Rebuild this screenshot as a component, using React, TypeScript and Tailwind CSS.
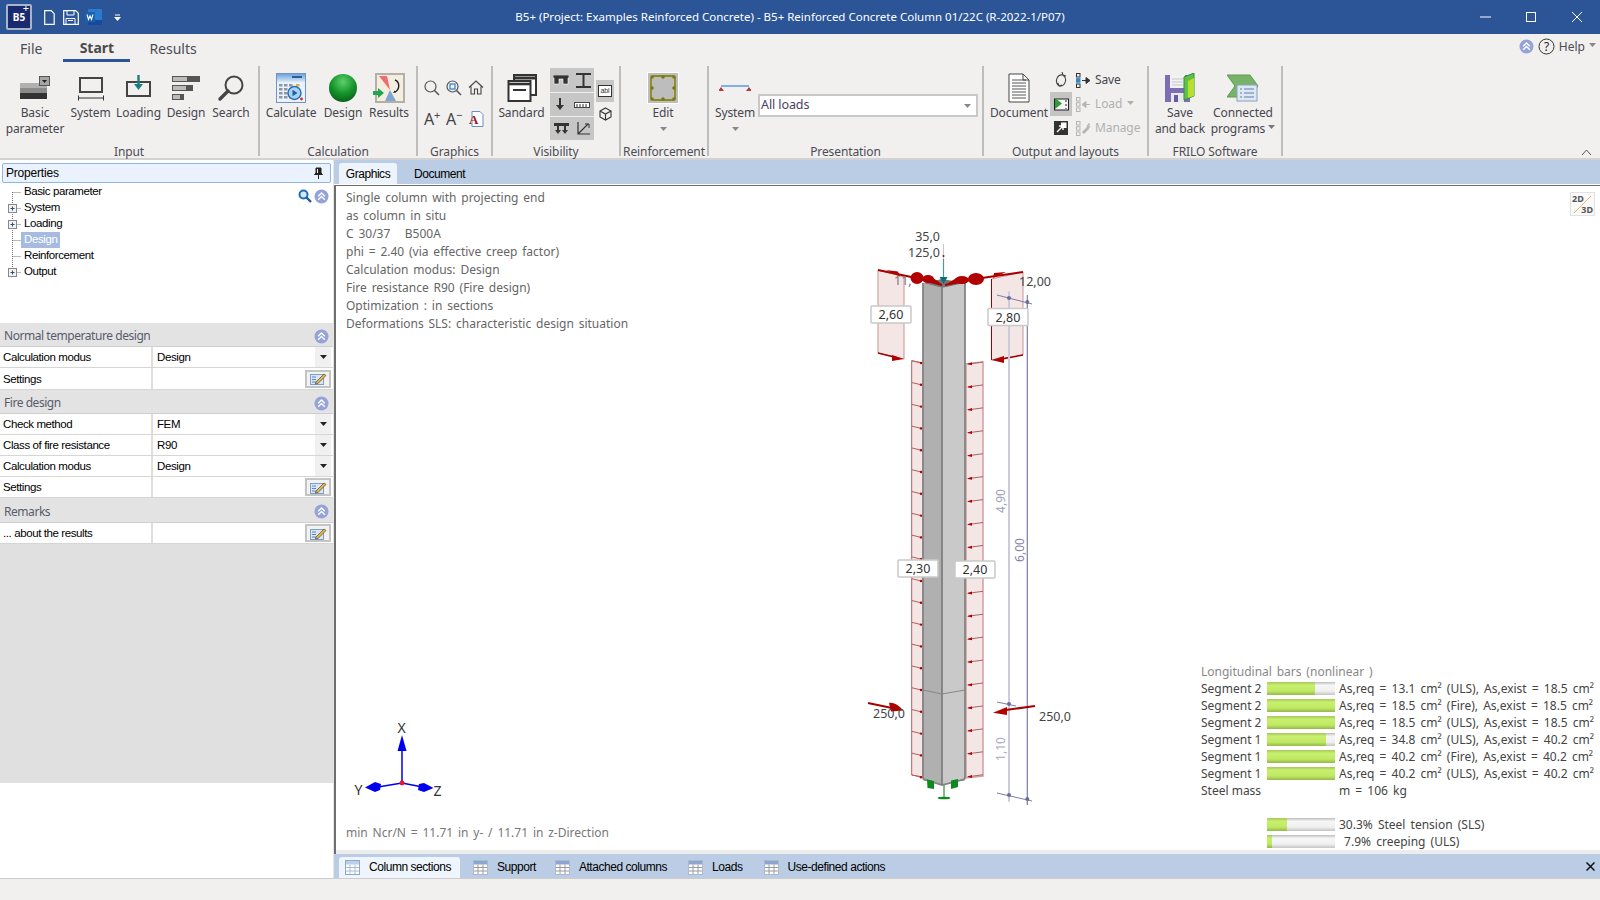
import type { ReactNode } from "react";

const UI = "font-['Noto_Sans',sans-serif]";
const CLASSIC = "font-['Liberation_Sans',sans-serif]";

/* small shared glyphs */
const Caret = ({ color = "#777" }: { color?: string }) => (
  <svg width="7" height="4" viewBox="0 0 7 4"><path d="M0 0h7L3.5 4z" fill={color} /></svg>
);

const CollapseDot = () => (
  <svg width="15" height="15" viewBox="0 0 15 15">
    <circle cx="7.5" cy="7.5" r="7" fill="#95a3d8" />
    <path d="M4.2 7.2 7.5 4l3.3 3.2M4.2 10.8 7.5 7.6l3.3 3.2" fill="none" stroke="#fff" strokeWidth="1.4" />
  </svg>
);

const GridIcon = ({ active }: { active?: boolean }) => (
  <svg width="15" height="15" viewBox="0 0 15 15">
    <rect x="0.5" y="0.5" width="14" height="14" fill="#fff" stroke={active ? "#8fa9cc" : "#a9b9d2"} />
    <rect x="1" y="1" width="13" height="3.5" fill={active ? "#bcd0ea" : "#8ca6cf"} />
    <path d="M1 7.5h13M1 11h13M5 4.5V14M10 4.5V14" stroke={active ? "#a7bcd8" : "#9a9a9a"} />
  </svg>
);

const EditIcon = () => (
  <svg width="17" height="13" viewBox="0 0 17 13">
    <rect x="0.5" y="2.5" width="13" height="10" fill="#d8e6f6" stroke="#7f9fc8" />
    <path d="M2 5h4M2 7.5h4M2 10h4" stroke="#5f86bd" />
    <path d="M6 10 14 2l2 1.5L8 11.5 5.5 12z" fill="#e8b93c" stroke="#444" strokeWidth="0.7" />
  </svg>
);

/* ribbon icons */
const BasicIcon = () => (
  <svg width="32" height="26" viewBox="0 0 32 26">
    <rect x="1" y="8" width="27" height="5" fill="#b0b0b0" />
    <rect x="1" y="13" width="27" height="5" fill="#8a8a8a" />
    <rect x="1" y="18" width="27" height="6" fill="#333" />
    <rect x="20.5" y="1.5" width="10" height="9" fill="#a5a5a5" stroke="#555" />
    <path d="M23 5h5l-2.5 3z" fill="#222" />
  </svg>
);
const SystemIcon = () => (
  <svg width="28" height="26" viewBox="0 0 28 26">
    <rect x="3" y="3" width="22" height="14" fill="none" stroke="#444" strokeWidth="2" />
    <path d="M1 23h26M1.5 20.5v5M26.5 20.5v5" stroke="#333" />
  </svg>
);
const LoadingIcon = () => (
  <svg width="26" height="26" viewBox="0 0 26 26">
    <rect x="1" y="7" width="23" height="14" fill="none" stroke="#444" strokeWidth="2" />
    <path d="M12.5 0v10" stroke="#16807c" strokeWidth="2.4" />
    <path d="M8 9h9l-4.5 6z" fill="#16807c" />
  </svg>
);
const DesignBarsIcon = () => (
  <svg width="30" height="26" viewBox="0 0 30 26">
    <rect x="1" y="1" width="28" height="6" fill="#555" />
    <rect x="2" y="2" width="14" height="4" fill="#bbb" />
    <rect x="1" y="10" width="21" height="6" fill="#555" />
    <rect x="2" y="11" width="13" height="4" fill="#bbb" />
    <rect x="1" y="19" width="12" height="6" fill="#555" />
    <rect x="2" y="20" width="7" height="4" fill="#bbb" />
  </svg>
);
const SearchBigIcon = () => (
  <svg width="28" height="28" viewBox="0 0 28 28">
    <circle cx="17" cy="11" r="8.5" fill="none" stroke="#444" strokeWidth="2" />
    <path d="M11 17 3 25" stroke="#444" strokeWidth="3.4" strokeLinecap="round" />
  </svg>
);
const CalculateIcon = () => (
  <svg width="30" height="30" viewBox="0 0 30 30">
    <defs>
      <linearGradient id="calc" x1="0" y1="0" x2="0" y2="1">
        <stop offset="0" stopColor="#6ea3dc" />
        <stop offset="1" stopColor="#d9e8f7" />
      </linearGradient>
    </defs>
    <rect x="0.5" y="0.5" width="29" height="29" fill="#eaf2fb" stroke="#6f95c4" />
    <rect x="1" y="1" width="28" height="8" fill="url(#calc)" />
    <path d="M16 4h10" stroke="#2c5c9a" strokeWidth="2" />
    {[11, 15, 19, 23].map((y) =>
      [3, 8, 13].map((x) => <rect key={`${x}-${y}`} x={x} y={y} width="3.5" height="2.5" fill="#8d97a8" />)
    )}
    <rect x="20" y="11" width="3.5" height="2.5" fill="#e9a94a" />
    <circle cx="18.5" cy="20" r="6.5" fill="#a8d2f2" stroke="#2a6cb0" strokeWidth="1.4" />
    <path d="M16.5 16.8v6.4l5-3.2z" fill="#1f5fa8" />
    <circle cx="25.5" cy="26" r="1.4" fill="#c33" />
  </svg>
);
const SphereIcon = () => (
  <svg width="30" height="30" viewBox="0 0 30 30">
    <defs>
      <radialGradient id="sphere" cx="0.5" cy="0.28" r="0.75">
        <stop offset="0" stopColor="#5fd06a" />
        <stop offset="0.55" stopColor="#15962c" />
        <stop offset="1" stopColor="#0a5c1a" />
      </radialGradient>
    </defs>
    <circle cx="15" cy="15" r="14" fill="url(#sphere)" />
  </svg>
);
const ResultsIcon = () => (
  <svg width="32" height="30" viewBox="0 0 32 30">
    <rect x="3" y="1" width="28" height="28" fill="#f3eee0" stroke="#b5b0a5" strokeWidth="2" />
    <path d="M6 3h8l3 14z" fill="#ee6d6d" />
    <path d="M17 17l6 11H12z" fill="#7ea6d4" />
    <path d="M22 7c5 2 5 9 0 12" fill="none" stroke="#222" strokeWidth="1.4" />
    <path d="M23 19.5l-3 .5 1.5-2.5z" fill="#222" />
    <path d="M0 18h5v-3l6 5-6 5v-3H0z" fill="#22a550" />
  </svg>
);
const SmallMag = ({ frame }: { frame?: boolean }) => (
  <svg width="16" height="16" viewBox="0 0 16 16">
    <circle cx="6.5" cy="6.5" r="5.5" fill="none" stroke="#555" strokeWidth="1.2" />
    <path d="M10.5 10.5 15 15" stroke="#555" strokeWidth="1.6" />
    {frame && <rect x="4" y="4" width="5" height="5" fill="none" stroke="#2f80c8" strokeWidth="1.2" />}
  </svg>
);
const HomeIcon = () => (
  <svg width="16" height="15" viewBox="0 0 16 15">
    <path d="M1 7.5 8 1l7 6.5M3 6.5V14h3.5V9h3v5H13V6.5" fill="none" stroke="#444" strokeWidth="1.1" />
  </svg>
);
const SizeA = ({ sign }: { sign: string }) => (
  <span className="relative text-[16px] leading-none text-[#444]">
    A<span className="absolute -top-[2px] -right-[6px] text-[11px] leading-none">{sign}</span>
  </span>
);
const FontDocIcon = () => (
  <svg width="15" height="16" viewBox="0 0 15 16">
    <path d="M3 .5h8l3 3v12H3z" fill="#fff" stroke="#6d8fc0" />
    <text x="0" y="13" fontSize="13" fontWeight="700" fontFamily="Liberation Serif" fill="#a01818">A</text>
  </svg>
);
const StackedWindows = () => (
  <svg width="30" height="30" viewBox="0 0 30 30">
    <rect x="7" y="2" width="22" height="20" fill="#fff" stroke="#333" strokeWidth="2" />
    <path d="M7 5h22" stroke="#333" strokeWidth="3" />
    <rect x="1.5" y="8" width="22" height="20" fill="#fff" stroke="#333" strokeWidth="2" />
    <path d="M1.5 11h22" stroke="#333" strokeWidth="2.6" />
    <path d="M6 17h13" stroke="#333" strokeWidth="2" />
  </svg>
);
const ReinforceIcon = () => (
  <div className="flex h-[32px] w-[32px] items-center justify-center border border-white bg-[#bdbdbd]">
    <svg width="28" height="28" viewBox="0 0 28 28">
      <rect x="2" y="2" width="24" height="24" rx="3" fill="none" stroke="#8a8a1e" strokeWidth="1.8" />
      {[[3, 3], [14, 3], [25, 3], [3, 14], [25, 14], [3, 25], [14, 25], [25, 25]].map(([x, y]) => (
        <circle key={`${x}${y}`} cx={x} cy={y} r="1.8" fill="#7b7b12" />
      ))}
    </svg>
  </div>
);
const BeamIcon = () => (
  <svg width="32" height="8" viewBox="0 0 32 8">
    <path d="M2 2h28" stroke="#7fb0e4" strokeWidth="2" />
    <path d="M2 3 5 7H-1zM30 3l3 4h-6z" fill="#b23a3a" />
  </svg>
);
const DocumentIcon = () => (
  <svg width="22" height="30" viewBox="0 0 22 30">
    <path d="M1 1h14l6 6v22H1z" fill="#fff" stroke="#444" />
    <path d="M15 1v6h6" fill="none" stroke="#444" />
    {[6, 9, 12, 15, 18, 21, 24].map((y) => (
      <path key={y} d={`M4 ${y + 1}h14`} stroke="#555" />
    ))}
  </svg>
);
const ListArrow = ({ dim, kind }: { dim?: boolean; kind: "save" | "load" | "manage" }) => {
  const c = dim ? "#b5b5b5" : "#333";
  return (
    <svg width="15" height="15" viewBox="0 0 15 15">
      <rect x="0.5" y="0.5" width="3.5" height="3.5" fill="none" stroke={c} />
      <rect x="0.5" y="5.7" width="3.5" height="3.5" fill={dim ? "none" : "#2e8bc8"} stroke={dim ? c : "#2e8bc8"} />
      <rect x="0.5" y="11" width="3.5" height="3.5" fill="none" stroke={c} />
      {kind === "save" && <path d="M6 7.5h5M10 4.5l4 3-4 3z" stroke={c} fill={c} />}
      {kind === "load" && <path d="M14 7.5H9M10 4.5l-4 3 4 3z" stroke={c} fill={c} />}
      {kind === "manage" && <path d="M13.5 2.5 11.5 5l1 1.5L14 5M12 6l-5 5 1 1 5-5" stroke={c} fill="none" strokeWidth="1.5" />}
    </svg>
  );
};
const SaveBackIcon = () => (
  <svg width="30" height="30" viewBox="0 0 30 30">
    <rect x="0" y="2" width="25" height="27" fill="#7d6db5" />
    <rect x="5" y="2" width="15" height="13" fill="#f2f2f2" />
    <path d="M7 6h11M7 9h11M7 12h11" stroke="#c5c5c5" />
    <rect x="6" y="20" width="13" height="9" fill="#e8e8e8" />
    <rect x="9" y="22" width="4" height="7" fill="#6a5aa5" />
    <path d="M19 4 29 0v23l-10 4z" fill="#62c04a" stroke="#2e8f3a" />
    <path d="M23 8l6-3v18l-6 2z" fill="#b6e02e" />
  </svg>
);
const ConnectedIcon = () => (
  <svg width="32" height="28" viewBox="0 0 32 28">
    <path d="M0 1h23l8 11-8 11H0l8-11z" fill="#79b36a" stroke="#5e9a52" />
    <rect x="10" y="11" width="20" height="16" fill="#dee8f4" stroke="#8aa0bd" />
    <path d="M13 15h2M17 15h10M13 19h2M17 19h10M13 23h2M17 23h10" stroke="#5f7ea8" />
  </svg>
);
const SmallIconBase = ({ children, bg }: { children: ReactNode; bg?: boolean }) => (
  <div className={`flex h-[24px] w-[22px] items-center justify-center ${bg ? "bg-[#c4c4c4]" : ""}`}>{children}</div>
);

/* ribbon parts */
const RibbonButton = ({ icon, label, w, caret }: { icon: ReactNode; label: string[]; w: string; caret?: boolean }) => (
  <div className={`flex shrink-0 flex-col items-center ${w}`}>
    <div className="flex h-[43px] items-center justify-center pt-[8px]">{icon}</div>
    {label.map((l, i) => (
      <div key={l} className="flex h-[16px] items-center whitespace-nowrap leading-[16px]">
        {l}
        {caret && i === label.length - 1 && label.length > 1 && <span className="ml-[3px] mb-[4px] inline-flex"><Caret /></span>}
      </div>
    ))}
    {caret && label.length === 1 && <div className="mt-[6px] flex"><Caret color="#888" /></div>}
  </div>
);

const Group = ({ w, label, children }: { w: string; label: string; children: ReactNode }) => (
  <div className={`flex h-full shrink-0 flex-col ${w}`}>
    <div className="flex flex-1 items-start">{children}</div>
    <div className="flex h-[12px] items-center justify-center whitespace-nowrap text-[#4c4c55]">{label}</div>
  </div>
);
const GroupRule = () => <div className="mt-[4px] h-[90px] w-[2px] shrink-0 bg-[#bdbdbd]" />;

const Ribbon = () => (
  <div className={`flex h-[98px] shrink-0 items-start border-b-2 border-[#d2d2d2] bg-[#f1f0ef] text-[12px] tracking-[-0.1px] text-[#46464e] ${UI}`}>
    <Group w="w-[258px]" label="Input">
      <div className="flex pl-[2px]">
        <RibbonButton icon={<BasicIcon />} label={["Basic", "parameter"]} w="w-[66px]" />
        <RibbonButton icon={<SystemIcon />} label={["System"]} w="w-[45px]" />
        <RibbonButton icon={<LoadingIcon />} label={["Loading"]} w="w-[51px]" />
        <RibbonButton icon={<DesignBarsIcon />} label={["Design"]} w="w-[44px]" />
        <RibbonButton icon={<SearchBigIcon />} label={["Search"]} w="w-[46px]" />
      </div>
    </Group>
    <GroupRule />
    <Group w="w-[156px]" label="Calculation">
      <div className="flex pl-[3px]">
        <RibbonButton icon={<CalculateIcon />} label={["Calculate"]} w="w-[56px]" />
        <RibbonButton icon={<SphereIcon />} label={["Design"]} w="w-[48px]" />
        <RibbonButton icon={<ResultsIcon />} label={["Results"]} w="w-[44px]" />
      </div>
    </Group>
    <GroupRule />
    <Group w="w-[73px]" label="Graphics">
      <div className="grid grid-cols-3 grid-rows-2 pl-[3px] pt-[18px]">
        <div className="flex h-[29px] w-[22px] items-start justify-center"><SmallMag /></div>
        <div className="flex h-[29px] w-[22px] items-start justify-center"><SmallMag frame /></div>
        <div className="flex h-[29px] w-[22px] items-start justify-center"><HomeIcon /></div>
        <div className="flex h-[20px] w-[22px] items-center justify-start pl-[3px]"><SizeA sign="+" /></div>
        <div className="flex h-[20px] w-[22px] items-center justify-start pl-[3px]"><SizeA sign="−" /></div>
        <div className="flex h-[20px] w-[22px] items-center justify-center"><FontDocIcon /></div>
      </div>
    </Group>
    <GroupRule />
    <Group w="w-[126px]" label="Visibility">
      <div className="flex">
        <RibbonButton icon={<StackedWindows />} label={["Sandard"]} w="w-[57px]" />
        <div className="flex flex-col pt-[6px]">
          <div className="flex h-[24px] w-[44px] items-center justify-around bg-[#c6c6c6]">
            <svg width="16" height="10" viewBox="0 0 16 10"><path d="M0 0h16v3h-1v6h-5V4H6v5H1V3H0z" fill="#333" stroke="#fff" strokeWidth="0.6" /></svg>
            <svg width="15" height="15" viewBox="0 0 15 15"><path d="M0 1h15M0 14h15M7.5 1v13" stroke="#333" strokeWidth="2" /></svg>
          </div>
          <div className="mt-[1px] flex h-[23px] w-[44px] items-center justify-around bg-[#c6c6c6]">
            <svg width="10" height="13" viewBox="0 0 10 13"><path d="M5 0v8" stroke="#333" strokeWidth="2" /><path d="M1 7h8l-4 5z" fill="#333" /></svg>
            <svg width="16" height="6" viewBox="0 0 16 6"><rect x=".5" y=".5" width="15" height="5" fill="#fff" stroke="#444" /><path d="M3 2v3M6 2v3M9 2v3M12 2v3" stroke="#333" /></svg>
          </div>
          <div className="mt-[1px] flex h-[23px] w-[44px] items-center justify-around bg-[#c6c6c6]">
            <svg width="15" height="11" viewBox="0 0 15 11"><rect width="15" height="3" fill="#333" /><path d="M4 2v6M11 2v6" stroke="#333" strokeWidth="2" /><path d="M1 7h6l-3 4zM8 7h6l-3 4z" fill="#333" /></svg>
            <svg width="15" height="15" viewBox="0 0 15 15"><path d="M2 1v12h12M2 13 12 3" fill="none" stroke="#333" strokeWidth="1.2" /><path d="M9 3h4v4" fill="none" stroke="#333" /></svg>
          </div>
        </div>
        <div className="flex w-[22px] flex-col items-center pt-[18px]">
          <div className="flex h-[22px] w-[18px] items-center justify-center bg-[#c6c6c6]">
            <span className={`border border-[#333] bg-white px-[1px] text-[7px] leading-[10px] text-[#333] ${CLASSIC}`}>abl</span>
          </div>
          <svg className="mt-[5px]" width="13" height="14" viewBox="0 0 13 14"><path d="M6.5 1 12 4v6l-5.5 3L1 10V4zM1 4l5.5 3L12 4M6.5 7v6" fill="none" stroke="#333" strokeWidth="1.1" /></svg>
        </div>
      </div>
    </Group>
    <GroupRule />
    <Group w="w-[86px]" label="Reinforcement">
      <div className="flex w-full justify-center pr-[2px]">
        <RibbonButton icon={<ReinforceIcon />} label={["Edit"]} w="w-[40px]" caret />
      </div>
    </Group>
    <GroupRule />
    <Group w="w-[273px]" label="Presentation">
      <div className="flex items-start">
        <RibbonButton icon={<BeamIcon />} label={["System"]} w="w-[52px]" caret />
        <div className="-ml-[3px] mt-[32px] flex h-[23px] w-[220px] items-center justify-between border-2 border-[#c8c8c8] bg-white pl-[1px] pr-[5px] text-[12.5px] text-[#4a4060]">
          All loads
          <Caret color="#888" />
        </div>
      </div>
    </Group>
    <GroupRule />
    <Group w="w-[163px]" label="Output and layouts">
      <div className="flex items-start">
        <RibbonButton icon={<DocumentIcon />} label={["Document"]} w="w-[70px]" />
        <div className="-ml-[4px] flex flex-col pt-[6px]">
          <SmallIconBase>
            <svg width="14" height="17" viewBox="0 0 14 17"><path d="M9 3C3 2 0 10 5 14M5 14l-1-3M5 14l3-1M5 14c6 1 9-7 4-11M9 3 8 0M9 3l3 1" fill="none" stroke="#444" strokeWidth="1.1" /></svg>
          </SmallIconBase>
          <SmallIconBase bg>
            <svg width="15" height="14" viewBox="0 0 15 14"><rect x=".5" y="2" width="14" height="11" fill="#f4f4f4" stroke="#222" /><path d="M1 1v11l7-5.5z" fill="#2f9a3a" /><path d="M12 3v2M12 7v2M12 11v1" stroke="#222" /></svg>
          </SmallIconBase>
          <SmallIconBase>
            <svg width="14" height="14" viewBox="0 0 14 14"><rect width="14" height="14" fill="#333" /><rect x="7" y="1.5" width="5.5" height="5.5" fill="#fff" /><path d="M3 11 9 5M5 5h4v4" stroke="#fff" fill="none" strokeWidth="1.4" /></svg>
          </SmallIconBase>
        </div>
        <div className="ml-[4px] flex flex-col pt-[6px]">
          <div className="flex h-[24px] items-center gap-[4px]"><ListArrow kind="save" />Save</div>
          <div className="flex h-[24px] items-center gap-[4px] text-[#b0b0b0]"><ListArrow kind="load" dim />Load<span className="mb-[3px] ml-[1px] flex"><Caret color="#b0b0b0" /></span></div>
          <div className="flex h-[24px] items-center gap-[4px] text-[#b0b0b0]"><ListArrow kind="manage" dim />Manage</div>
        </div>
      </div>
    </Group>
    <GroupRule />
    <Group w="w-[132px]" label="FRILO Software">
      <div className="flex pl-[3px]">
        <RibbonButton icon={<SaveBackIcon />} label={["Save", "and back"]} w="w-[56px]" />
        <RibbonButton icon={<ConnectedIcon />} label={["Connected", "programs"]} w="w-[70px]" caret />
      </div>
    </Group>
    <GroupRule />
    <div className="ml-auto mr-[8px] mt-[87px] flex">
      <svg width="11" height="7" viewBox="0 0 11 7"><path d="M1 6 5.5 1 10 6" fill="none" stroke="#555" /></svg>
    </div>
  </div>
);

/* left side */
const TreeRow = ({ label, plus, first, last, selected }: { label: string; plus?: boolean; first?: boolean; last?: boolean; selected?: boolean }) => (
  <div className="flex h-[16px] items-center">
    <svg width="21" height="16" viewBox="0 0 21 16" className="shrink-0">
      <path d={`M12.5 ${first ? 8 : 0}V${last ? 8 : 16}`} stroke="#777" strokeDasharray="1 1" />
      <path d="M12.5 8.5H21" stroke="#777" strokeDasharray="1 1" />
      {plus && (
        <>
          <rect x="8.5" y="4.5" width="8" height="8" fill="#f2f2f2" stroke="#888" />
          <path d="M10.5 8.5h4M12.5 6.5v4" stroke="#2a4a8a" />
        </>
      )}
    </svg>
    <span className={`flex h-[16px] items-center px-[3px] ${selected ? "bg-[#a6bbdf] text-white" : "text-black"}`}>{label}</span>
  </div>
);

const SectionHead = ({ label, h }: { label: string; h: string }) => (
  <div className={`flex items-center justify-between border-b border-[#cfcfcf] bg-[#e3e3e3] pl-[4px] pr-[4px] pt-[3px] text-[12px] tracking-[-0.45px] text-[#565c6c] ${h} ${UI}`}>
    {label}
    <CollapseDot />
  </div>
);

const PropRow = ({ label, value, kind, h = "h-[21px]" }: { label: string; value?: string; kind: "select" | "edit"; h?: string }) => (
  <div className={`flex border-b border-[#d6d6d6] bg-white ${h}`}>
    <div className="flex w-[153px] shrink-0 items-center border-r-2 border-[#dedede] pl-[3px] pt-[2px]">{label}</div>
    <div className="flex flex-1 items-center justify-between pl-[4px]">
      <span className="pt-[2px]">{value}</span>
      {kind === "select" ? (
        <div className="mr-[2px] flex h-full w-[16px] items-center justify-center bg-[#f0f0f0]"><Caret color="#222" /></div>
      ) : (
        <div className="mr-[2px] flex h-[18px] w-[26px] items-center justify-center border-2 border-[#c4c4c4] bg-[#f2f2f2]"><EditIcon /></div>
      )}
    </div>
  </div>
);

const LeftPanel = () => (
  <div className={`flex w-[334px] shrink-0 flex-col border-r border-[#e4e4e4] bg-white text-[11.5px] tracking-[-0.4px] ${CLASSIC}`}>
    <div className="shrink-0 px-[2px] pt-[3px]">
      <div className="flex h-[20px] items-center justify-between rounded-[2px] border border-[#8fb6e6] bg-[#eaf3fd] pl-[3px] pr-[7px] text-[12px] tracking-[-0.2px] text-black">
        Properties
        <svg width="9" height="12" viewBox="0 0 9 12"><path d="M2 1h5v5l1.5 1.5h-8L2 6zM4.5 7.5V12" fill="#222" stroke="#222" /><path d="M3.5 2v4" stroke="#fff" /></svg>
      </div>
    </div>
    <div className="flex h-[140px] shrink-0 justify-between pr-[4px] pt-[1px]">
      <div className="flex flex-col">
        <TreeRow label="Basic parameter" first />
        <TreeRow label="System" plus />
        <TreeRow label="Loading" plus />
        <TreeRow label="Design" selected />
        <TreeRow label="Reinforcement" />
        <TreeRow label="Output" plus last />
      </div>
      <div className="flex items-start gap-[2px] pt-[5px]">
        <svg width="14" height="14" viewBox="0 0 14 14"><circle cx="5.5" cy="5.5" r="4" fill="#d5e8f8" stroke="#1f6fb0" strokeWidth="2" /><path d="M8.5 8.5 13 13" stroke="#1f5a90" strokeWidth="2.4" /></svg>
        <CollapseDot />
      </div>
    </div>
    <SectionHead label="Normal temperature design" h="h-[24px]" />
    <PropRow label="Calculation modus" value="Design" kind="select" />
    <PropRow label="Settings" kind="edit" h="h-[22px]" />
    <SectionHead label="Fire design" h="h-[24px]" />
    <PropRow label="Check method" value="FEM" kind="select" />
    <PropRow label="Class of fire resistance" value="R90" kind="select" />
    <PropRow label="Calculation modus" value="Design" kind="select" />
    <PropRow label="Settings" kind="edit" />
    <SectionHead label="Remarks" h="h-[25px]" />
    <PropRow label="... about the results" kind="edit" />
    <div className="h-[239px] shrink-0 bg-[#e0e0e0]" />
    <div className="flex-1 bg-white" />
  </div>
);

/* model drawing, in page coordinates */
const leftTicks = Array.from({ length: 20 }, (_, k) => 360.7 + k * 21.8);
const rightTicks = Array.from({ length: 19 }, (_, k) => 364 + k * 22.93);

const BoxLabel = ({ x, y, text }: { x: number; y: number; text: string }) => (
  <g>
    <rect x={x} y={y} width="40" height="17" rx="1" fill="#fff" stroke="#c9c9c9" strokeWidth="1.5" />
    <text x={x + 20} y={y + 13} textAnchor="middle" fontSize="12.5" fill="#333">{text}</text>
  </g>
);

const ColumnDrawing = () => (
  <svg className={`absolute left-0 top-0 ${UI}`} width="1264" height="664" viewBox="336 186 1264 664">
    {/* upper load panels */}
    <path d="M878 270 904 277V359L878 353Z" fill="#f5e6e6" stroke="#c89595" />
    <path d="M991.5 279 1023 272V355L991.5 360Z" fill="#f5e6e6" stroke="#c89595" />
    <path d="M878 353 896 357.5" stroke="#a00000" strokeWidth="1.4" />
    <path d="M892 355 904 359 892 361Z" fill="#b00000" />
    <path d="M1023 355 1002 359" stroke="#a00000" strokeWidth="1.4" />
    <path d="M991.5 360 1004 356V363Z" fill="#b00000" />
    <path d="M991.5 279V360" stroke="#a00000" />
    {/* lower load panels */}
    <path d="M911.7 360.7 923 363V777L911.7 775Z" fill="#f5e6e6" stroke="#c05a5a" />
    <path d="M983 362 966 364V778L983 776Z" fill="#f5e6e6" stroke="#d0a0a0" strokeWidth="1.5" />
    {leftTicks.map((y) => (
      <g key={y}>
        <path d={`M911.7 ${y}L922 ${y + 2.5}`} stroke="#b06060" />
        <circle cx="921" cy={y + 2.3} r="1.2" fill="#b00000" />
      </g>
    ))}
    {rightTicks.map((y) => (
      <g key={y}>
        <path d={`M983 ${y - 2}L968 ${y}`} stroke="#b06060" />
        <path d={`M967 ${y}l5-1.8v3z`} fill="#b00000" />
      </g>
    ))}
    {/* column */}
    <path d="M923 283 942 288V785L923 779Z" fill="#b0b0b0" />
    <path d="M942 288 965 283V779L942 785Z" fill="#c9c9c9" />
    <path d="M923 283 942 279 965 283 942 288Z" fill="#777" />
    <path d="M923 283V777q0 3 3 3l16 5 20-5q3 0 3-3V283" fill="none" stroke="#848484" strokeWidth="1.8" />
    <path d="M942 288V785" stroke="#7f7f7f" strokeWidth="1.8" />
    <path d="M923 690 942 694 965 690" fill="none" stroke="#888" strokeWidth="1.2" />
    {/* top arrows */}
    <path d="M878 270 916 278 942 285" fill="none" stroke="#a80000" strokeWidth="2" />
    <path d="M1023 272 975 279 945 285" fill="none" stroke="#a80000" strokeWidth="2" />
    <path d="M886 270l12 1.500 2 5zM1006 272l-12 1-1 5z" fill="#b00000" />
    <ellipse cx="917" cy="278" rx="6.5" ry="6" fill="#b00000" />
    <ellipse cx="928" cy="279" rx="6" ry="4" fill="#b00000" />
    <path d="M930 276 942 284 932 282z" fill="#b00000" />
    <ellipse cx="976" cy="279" rx="8" ry="6" fill="#b00000" />
    <ellipse cx="962" cy="280" rx="7" ry="4" fill="#b00000" />
    <path d="M958 277 945 285 958 283z" fill="#b00000" />
    <path d="M943.5 244V283" stroke="#d8c0c0" />
    <path d="M943.5 259V280" stroke="#4a9a9a" strokeWidth="1.2" />
    <path d="M939.5 277h8l-4 7z" fill="#107070" />
    <circle cx="943.5" cy="256" r="1" fill="#a00000" />
    {/* dimensions */}
    <path d="M1009 291.6V801.7" stroke="#cbcbdd" strokeWidth="2" />
    <path d="M1027.3 295V805" stroke="#7c7ca6" strokeWidth="1.2" />
    <path d="M997 295 1032 304M997 702 1016 706M997 793 1032 801" stroke="#7c7ca6" />
    {[[1009, 298], [1027.3, 302], [1009, 704], [1009, 795], [1027.3, 799]].map(([x, y]) => (
      <circle key={`${x}${y}`} cx={x} cy={y} r="2" fill="#6c6c98" />
    ))}
    <text transform="translate(1005 501) rotate(-90)" textAnchor="middle" fontSize="12" fill="#9c9cbc">4,90</text>
    <text transform="translate(1024 550) rotate(-90)" textAnchor="middle" fontSize="12" fill="#8484a8">6,00</text>
    <text transform="translate(1005 749) rotate(-90)" textAnchor="middle" fontSize="12" fill="#a8a8c4">1,10</text>
    {/* side forces */}
    <path d="M868 703 892 708" stroke="#a80000" strokeWidth="2" />
    <path d="M889 703c4-1 10 2 14 7.5l-12 1z" fill="#b00000" />
    <path d="M1035 706 1006 710" stroke="#a80000" strokeWidth="2" />
    <path d="M993 712.7 1007 707V715Z" fill="#b00000" />
    {/* support */}
    <path d="M927 779.5 934 781V789L927.5 788Z" fill="#0b8a1e" />
    <path d="M951 780.5 958 779V787L951 789Z" fill="#0b8a1e" />
    <path d="M944 785V797" stroke="#5a9a5a" strokeWidth="1.4" />
    <ellipse cx="944" cy="798" rx="6.5" ry="1.3" fill="#0b8a1e" />
    {/* values */}
    <g fontSize="12.5" fill="#444">
      <text x="940" y="240.5" textAnchor="end">35,0</text>
      <text x="940" y="256.5" textAnchor="end">125,0</text>
      <text x="894" y="285" fill="#777">11,</text>
      <text x="1019" y="286">12,00</text>
      <text x="873" y="717.5">250,0</text>
      <text x="1039" y="720.5">250,0</text>
    </g>
    <BoxLabel x={871} y={306} text="2,60" />
    <BoxLabel x={988} y={308.5} text="2,80" />
    <BoxLabel x={898} y={560} text="2,30" />
    <BoxLabel x={955} y={561} text="2,40" />
    {/* axis cross */}
    <path d="M402 783V745M402 783 375 787.5M402 783 425 787.5" stroke="#0000f0" strokeWidth="1.5" />
    <path d="M402 735 397.5 751H406.5Z" fill="#0000f0" />
    <path d="M365 787.5 375 782 381 784 380 790 375 792Z" fill="#0000f0" />
    <path d="M433.5 788 424 792 418 790 419 784 424 783Z" fill="#0000f0" />
    <circle cx="402" cy="783" r="2.4" fill="#f01030" />
    <g fontSize="14" fill="#333">
      <text x="401.5" y="733" textAnchor="middle">X</text>
      <text x="358.5" y="795" textAnchor="middle">Y</text>
      <text x="437.5" y="796" textAnchor="middle">Z</text>
    </g>
  </svg>
);

/* results legend */
const Bar = ({ pct }: { pct: number }) => (
  <div className="h-[13px] w-[68px] shrink-0 bg-[linear-gradient(#bdbdbd,#f6f6f6_25%,#f0f0f0_70%,#c4c4c4)]">
    <div className="h-full bg-[linear-gradient(#a5c85a,#c8f06e_25%,#bfe863_70%,#94b84a)]" style={{ width: `${pct}%` }} />
  </div>
);

const segmentRows = [
  { seg: "Segment 2", pct: 71, text: "As,req = 13.1 cm² (ULS), As,exist = 18.5 cm²" },
  { seg: "Segment 2", pct: 100, text: "As,req = 18.5 cm² (Fire), As,exist = 18.5 cm²" },
  { seg: "Segment 2", pct: 100, text: "As,req = 18.5 cm² (ULS), As,exist = 18.5 cm²" },
  { seg: "Segment 1", pct: 87, text: "As,req = 34.8 cm² (ULS), As,exist = 40.2 cm²" },
  { seg: "Segment 1", pct: 100, text: "As,req = 40.2 cm² (Fire), As,exist = 40.2 cm²" },
  { seg: "Segment 1", pct: 100, text: "As,req = 40.2 cm² (ULS), As,exist = 40.2 cm²" },
];

const LegendRow = ({ seg, pct, text }: { seg?: string; pct?: number; text: string }) => (
  <div className="flex h-[17px] items-center whitespace-pre">
    <span className="w-[66px] shrink-0 [word-spacing:0px]">{seg}</span>
    {pct !== undefined ? <Bar pct={pct} /> : <span className="w-[68px] shrink-0" />}
    <span className="ml-[4px] [word-spacing:2px]">{text}</span>
  </div>
);

const Legend = () => (
  <div className="flex w-[399px] flex-col text-[#444]">
    <div className="flex h-[17px] items-center text-[#888]">Longitudinal bars (nonlinear )</div>
    {segmentRows.map((r) => (
      <LegendRow key={r.text} {...r} />
    ))}
    <LegendRow seg="Steel mass" text="m = 106 kg" />
    <div className="h-[17px]" />
    <LegendRow pct={30} text="30.3% Steel tension (SLS)" />
    <LegendRow pct={8} text=" 7.9% creeping (ULS)" />
  </div>
);

const notes = [
  "Single column with projecting end",
  "as column in situ",
  "C 30/37   B500A",
  "phi = 2.40 (via effective creep factor)",
  "Calculation modus: Design",
  "Fire resistance R90 (Fire design)",
  "Optimization : in sections",
  "Deformations SLS: characteristic design situation",
];

const Canvas = () => (
  <div className={`relative flex min-h-0 flex-1 flex-col border-l-2 border-t border-[#6e6e6e] bg-white text-[12px] [word-spacing:1.7px] ${UI}`}>
    <ColumnDrawing />
    <div className="relative flex items-start justify-between pl-[10px] pr-[5px] pt-[3px] text-[#666]">
      <div className="flex flex-col whitespace-pre">
        {notes.map((n) => (
          <div key={n} className="flex h-[18px] items-center">{n}</div>
        ))}
      </div>
      <div className="relative mt-[3px] flex h-[24px] w-[25px] flex-col border border-[#e2e2e2] bg-[#fafafa] px-[1px] text-[9px] font-bold leading-[11px] text-[#555]">
        <span>2D</span>
        <span className="text-right">3D</span>
        <svg className="absolute left-0 top-0" width="23" height="22" viewBox="0 0 23 22"><path d="M3 20 20 3" stroke="#e8b36a" /></svg>
      </div>
    </div>
    <div className="flex-1" />
    <div className="relative flex items-end justify-between border-b-4 border-[#ececec] pl-[10px]">
      <div className="pb-[8px] text-[#777]">min Ncr/N = 11.71 in y- / 11.71 in z-Direction</div>
      <Legend />
    </div>
  </div>
);

const bottomTabs = [
  { label: "Support", gap: "ml-[13px]" },
  { label: "Attached columns", gap: "ml-[19px]" },
  { label: "Loads", gap: "ml-[21px]" },
  { label: "Use-defined actions", gap: "ml-[21px]" },
];

export default function App() {
  return (
    <div className="flex h-screen w-full flex-col overflow-hidden bg-[#f1f0ef]">
      {/* title bar */}
      <div className={`flex h-[34px] shrink-0 items-center bg-[#2b5597] text-white ${UI}`}>
        <div className="flex w-[130px] shrink-0 items-center pl-[6px]">
          <div className="relative flex h-[26px] w-[26px] items-center justify-center rounded-[2px] border-2 border-[#aab4c8] bg-[#1a2a70] text-[10px] font-bold">
            B5
            <span className="absolute -top-[4px] right-[1px] text-[11px] font-normal leading-none">+</span>
          </div>
          <svg className="ml-[12px]" width="11" height="15" viewBox="0 0 11 15"><path d="M.7.7h6.500l3 3v10.600H.7z" fill="none" stroke="#fff" strokeWidth="1.2" /></svg>
          <svg className="ml-[8px]" width="16" height="15" viewBox="0 0 16 15"><path d="M.7.7h12l2.600 2.600v11H.7z" fill="none" stroke="#fff" strokeWidth="1.2" /><path d="M4 1v4h7V1M3 14V8.5h9V14M5 10.5h5" fill="none" stroke="#fff" /></svg>
          <svg className="ml-[6px]" width="17" height="16" viewBox="0 0 17 16"><rect x="3" width="14" height="16" rx="1" fill="#2a7bd0" /><rect x="3" y="11" width="14" height="5" fill="#174a9a" /><rect y="3" width="10" height="10" fill="#1a5fb0" /><path d="M2 5.5 3.5 10.5 5 7l1.500 3.500L8 5.5" fill="none" stroke="#fff" strokeWidth="1.1" /></svg>
          <svg className="ml-[12px]" width="7" height="7" viewBox="0 0 7 7"><path d="M1 1h5" stroke="#fff" /><path d="M0 3h7L3.5 7z" fill="#fff" /></svg>
        </div>
        <div className="flex-1 truncate text-center text-[11.5px]">B5+ (Project: Examples Reinforced Concrete) - B5+ Reinforced Concrete Column 01/22C (R-2022-1/P07)</div>
        <div className="flex w-[150px] shrink-0 items-center justify-end pr-[18px]">
          <svg width="11" height="2" viewBox="0 0 11 2"><path d="M0 1h11" stroke="#fff" /></svg>
          <svg className="ml-[35px]" width="10" height="10" viewBox="0 0 10 10"><rect x=".5" y=".5" width="9" height="9" fill="none" stroke="#fff" /></svg>
          <svg className="ml-[36px]" width="10" height="10" viewBox="0 0 10 10"><path d="m0 0 10 10M10 0 0 10" stroke="#fff" /></svg>
        </div>
      </div>

      {/* tab strip */}
      <div className={`flex h-[28px] shrink-0 items-stretch bg-[#f1f0ef] text-[14px] text-[#4c4c55] ${UI}`}>
        <div className="flex items-center pl-[20px]">File</div>
        <div className="ml-[21px] flex w-[67px] items-center justify-center border-b-[3px] border-[#2b5597] pt-[2px] font-bold text-[#4a4a4a]">Start</div>
        <div className="ml-[19px] flex items-center">Results</div>
        <div className="ml-auto flex items-center gap-[4px] pb-[3px] pr-[4px] text-[12px]">
          <CollapseDot />
          <svg width="17" height="17" viewBox="0 0 17 17"><circle cx="8.5" cy="8.5" r="7.5" fill="none" stroke="#333" /><text x="8.5" y="12.5" textAnchor="middle" fontSize="12" fill="#222">?</text></svg>
          Help
          <span className="mb-[3px] flex"><Caret color="#888" /></span>
        </div>
      </div>

      <Ribbon />

      {/* work area */}
      <div className="flex min-h-0 flex-1">
        <LeftPanel />
        <div className={`flex min-w-0 flex-1 flex-col bg-[#bbcde4] ${CLASSIC}`}>
          <div className="flex h-[25px] shrink-0 items-end border-b border-white pl-[5px] text-[12px] tracking-[-0.45px] text-black">
            <div className="flex h-[21px] w-[58px] items-center justify-center rounded-t-[3px] bg-[#eef4fb]">Graphics</div>
            <div className="ml-[17px] flex h-[21px] items-center">Document</div>
          </div>
          <Canvas />
          <div className="flex h-[24px] shrink-0 items-end pl-[5px] text-[12px] tracking-[-0.45px] text-black">
            <div className="flex h-[21px] w-[121px] items-center rounded-t-[3px] bg-[#eff5fc] pb-[1px] pl-[6px]">
              <GridIcon active />
              <span className="ml-[9px]">Column sections</span>
            </div>
            {bottomTabs.map((t) => (
              <div key={t.label} className={`flex h-[21px] items-center pb-[1px] ${t.gap}`}>
                <GridIcon />
                <span className="ml-[9px]">{t.label}</span>
              </div>
            ))}
            <div className="ml-auto flex h-full items-center pr-[5px]">
              <svg width="9" height="9" viewBox="0 0 9 9"><path d="m.5.5 8 8M8.5.5l-8 8" stroke="#111" strokeWidth="1.5" /></svg>
            </div>
          </div>
        </div>
      </div>

      {/* status bar */}
      <div className="h-[22px] shrink-0 border-t border-[#cccccc] bg-[#f1f0ef]" />
    </div>
  );
}
